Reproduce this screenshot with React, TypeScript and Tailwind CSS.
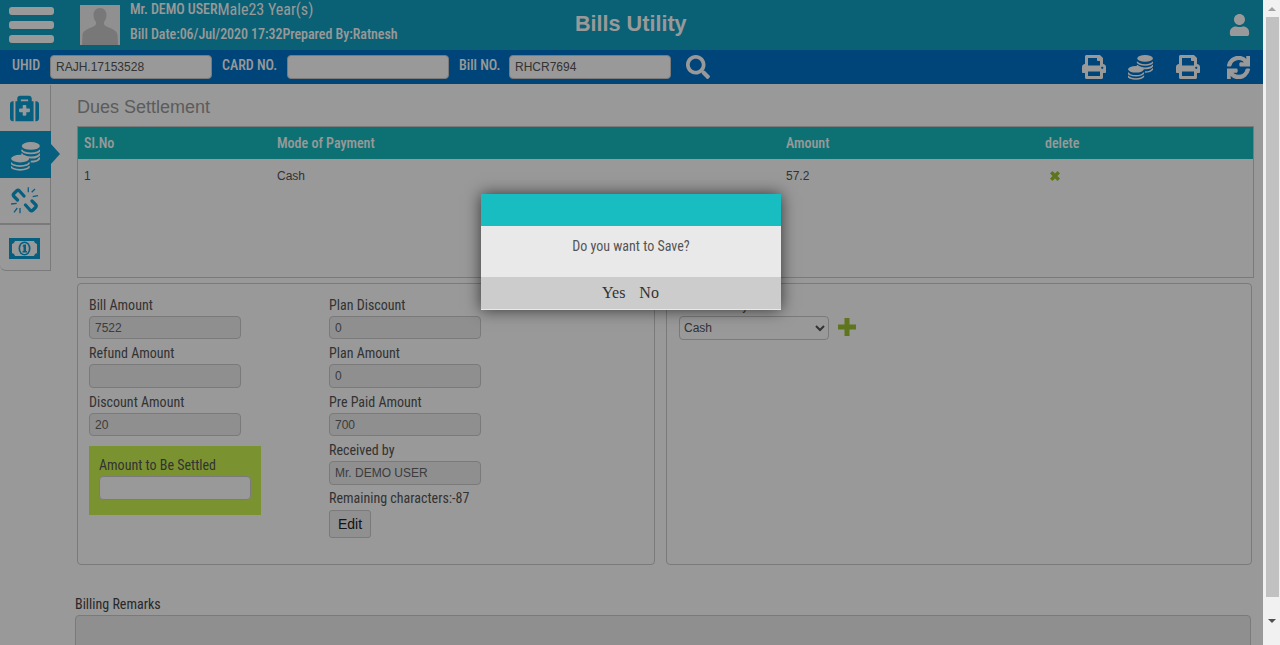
import { FaMedkit, FaPrint, FaSync, FaSearch, FaUser } from 'react-icons/fa';

// Bills Utility — dues settlement page behind a modal confirm dialog

const COND = "font-['Roboto_Condensed',Roboto,sans-serif] font-stretch-[75%]";
const ARIAL = "font-['Liberation_Sans',Arial,sans-serif]";

const Coins = ({ className }: { className?: string }) => (
    <svg viewBox="0 0 25 25" className={className} fill="none" stroke="currentColor" strokeWidth="1.5">
        <ellipse cx="17.100" cy="3.400" rx="7.800" ry="3.300" fill="currentColor" stroke="none" />
        <path d="M9.300 6.700a7.800 3.200 0 0 0 15.600 0M9.300 10a7.800 3.200 0 0 0 15.600 0M16 13.400c3.500.3 8-.5 8.900-3.400M17 17c3.500 0 7-1 7.900-3.600" />
        <ellipse cx="7.900" cy="14.300" rx="7.800" ry="3.300" fill="currentColor" stroke="none" />
        <path d="M.1 17.600a7.800 3.200 0 0 0 15.600 0M.1 20.800a7.800 3.200 0 0 0 15.600 0" />
    </svg>
);

const ChainBroken = ({ className }: { className?: string }) => (
    <svg viewBox="0 0 27 27" className={className} fill="none" stroke="currentColor">
        <path strokeWidth="3.200" strokeLinecap="round" strokeLinejoin="round" d="M6.500 13 3 9.500Q1.500 8 3 6.500L5.500 4Q7 2.500 8.500 4L13 9M14.500 18 19 23Q20.500 24.500 22 23L24.500 20.500Q26 19 24.500 17.500L21 14" />
        <path strokeWidth="1.300" d="M17.300.3v5M24 2l-3.300 3.300M27 8.700l-5.300 1M0 17l5.700-.7M3 25.300 6.300 21M9 21v5.300" />
    </svg>
);

const MoneyBill = ({ className }: { className?: string }) => (
    <svg viewBox="0 0 31 21" className={className}>
        <rect width="31" height="21" fill="currentColor" />
        <path fill="#fff" d="M6 3h19q.5 2.500 3 3v9q-2.500.5-3 3H6q-.5-2.500-3-3V6q2.500-.5 3-3z" />
        <ellipse cx="15.500" cy="10.500" rx="6" ry="7" fill="currentColor" />
        <ellipse cx="15.500" cy="10.500" rx="4.300" ry="5.500" fill="#fff" />
        <path fill="currentColor" d="M14.500 6.500H17v6.500h1v1.500h-4.500V13h1V8.800h-1z" />
    </svg>
);

const Cross = ({ className }: { className?: string }) => (
    <svg viewBox="0 0 10 10" className={className} fill="currentColor">
        <path d="M2.400 0 5 2.600 7.600 0 10 2.400 7.400 5 10 7.600 7.600 10 5 7.400 2.400 10 0 7.600 2.600 5 0 2.400z" />
    </svg>
);

const Plus = ({ className }: { className?: string }) => (
    <svg viewBox="0 0 18 18" className={className} fill="currentColor">
        <path d="M6.500 0h5v6.500H18v5h-6.500V18h-5v-6.500H0v-5h6.500z" />
    </svg>
);

const Field = ({ label, value, h = 'h-[23px]', gap = 'mb-[6px]' }: { label: string; value?: string; h?: string; gap?: string }) => (
    <div className={gap}>
        <div className={`${COND} text-[14px] leading-[17px] mb-[2px] text-[#555]`}>{label}</div>
        <div className={`${h} w-[152px] rounded-[4px] border border-[#ccc] bg-[#eee] px-[5px] flex items-center text-[12px] text-[#666] ${ARIAL}`}>{value}</div>
    </div>
);

const App = () => {
    return (
        <div className="relative flex h-[645px] w-[1280px] overflow-hidden bg-white">
            <div className="w-[1263px] shrink-0">
                {/* Top bar */}
                <header className="flex h-[50px] items-center bg-[#12a0c1] text-white">
                    <div className="ml-[9px] flex w-[45px] flex-col gap-[6px]">
                        <span className="h-[8px] rounded-[3px] bg-white" />
                        <span className="h-[8px] rounded-[3px] bg-white" />
                        <span className="h-[8px] rounded-[3px] bg-white" />
                    </div>
                    <div className="ml-[26px] h-[40px] w-[40px] bg-[#f0f0f0]">
                        <svg viewBox="0 0 40 40" className="h-full w-full text-[#c8c8c8]" fill="currentColor">
                            <path d="M20 3c-4 0-6.500 3-6.500 7 0 3 1 5 2.500 7 .5 2-.5 3.500-2.500 4.500C9 23.500 3 25 2.500 30L2 40h36l-.5-10c-.5-5-6.500-6.500-11-8.500-2-1-3-2.500-2.500-4.500 1.500-2 2.500-4 2.500-7 0-4-2.500-7-6.500-7z" />
                        </svg>
                    </div>
                    <div className={`ml-[10px] self-start ${COND}`}>
                        <div className="flex h-[19px] items-center whitespace-nowrap">
                            <span className="text-[14px] font-medium tracking-[-0.05px]">Mr. DEMO USER</span>
                            <span className="text-[16px]">Male23 Year(s)</span>
                        </div>
                        <div className="mt-[4px] flex h-[22px] items-center whitespace-nowrap text-[14px] font-medium tracking-[-0.05px]">Bill Date:06/Jul/2020 17:32Prepared By:Ratnesh</div>
                    </div>
                    <div className={`absolute left-[575px] top-[10px] text-[21.600px] font-bold leading-[28px] ${ARIAL}`}>Bills Utility</div>
                    <FaUser className="ml-auto mr-[13px] h-[22px] w-[21px]" />
                </header>

                {/* Search toolbar */}
                <div className="flex h-[34px] items-center bg-[#0073ca] text-white">
                    <span className={`ml-[12px] w-[38px] text-[14px] font-medium ${COND} -mt-[3px]`}>UHID</span>
                    <div className={`h-[24px] w-[162px] rounded-[4px] border border-[#ccc] bg-white px-[5px] text-[12px] leading-[22px] text-[#555] ${ARIAL}`}>RAJH.17153528</div>
                    <span className={`ml-[10px] w-[65px] text-[14px] font-medium ${COND} -mt-[3px]`}>CARD NO.</span>
                    <div className="h-[24px] w-[162px] rounded-[4px] border border-[#ccc] bg-white" />
                    <span className={`ml-[10px] w-[50px] text-[14px] font-medium ${COND} -mt-[3px]`}>Bill NO.</span>
                    <div className={`h-[24px] w-[162px] rounded-[4px] border border-[#ccc] bg-white px-[5px] text-[12px] leading-[22px] text-[#555] ${ARIAL}`}>RHCR7694</div>
                    <FaSearch className="ml-[15px] h-[24px] w-[24px]" />
                    <div className="ml-auto flex items-center">
                        <FaPrint className="h-[24px] w-[24px]" />
                        <Coins className="ml-[22px] h-[25px] w-[25px]" />
                        <FaPrint className="ml-[23px] h-[24px] w-[24px]" />
                        <FaSync className="ml-[27px] mr-[13px] h-[23px] w-[23px]" stroke="currentColor" strokeWidth={24} />
                    </div>
                </div>

                <div className="flex">
                    {/* Side nav */}
                    <nav className="w-[51px] shrink-0 pt-[1px] text-[#0d9fd6]">
                        <div className="flex h-[46px] items-center justify-center border-r border-[#ccc] pr-[1px]">
                            <FaMedkit className="h-[29px] w-[29px]" />
                        </div>
                        <div className="relative flex h-[47px] items-center justify-center bg-[#0a9fd4] pr-[1px] pt-[3px] text-white">
                            <Coins className="h-[29px] w-[29px]" />
                            <span className="absolute -right-[9px] top-[13px] h-0 w-0 border-y-[10px] border-l-[9px] border-y-transparent border-l-[#0a9fd4]" />
                        </div>
                        <div className="flex h-[46px] items-center justify-center border-b border-r border-[#ccc] pr-[1px]">
                            <ChainBroken className="h-[27px] w-[27px]" />
                        </div>
                        <div className="flex h-[47px] items-center justify-center rounded-bl-[6px] border-b border-r border-t border-[#ccc] pr-[1px] pt-[2px]">
                            <MoneyBill className="h-[21px] w-[31px]" />
                        </div>
                    </nav>

                    <main className="min-w-0 flex-1 pl-[26px] pr-[9px]">
                        <h1 className={`h-[42px] pt-[12px] text-[18px] leading-[22px] text-[#9a9a9a] ${ARIAL}`}>Dues Settlement</h1>

                        {/* Payments table */}
                        <div className="h-[152px] border border-[#ccc]">
                            <div className={`grid h-[32px] grid-cols-[199px_509px_259px_1fr] items-center bg-[#17bdc1] text-[14px] font-medium text-white ${COND}`}>
                                <span className="pl-[6px]">Sl.No</span>
                                <span>Mode of Payment</span>
                                <span>Amount</span>
                                <span>delete</span>
                            </div>
                            <div className={`grid h-[33px] grid-cols-[199px_509px_259px_1fr] items-center text-[12px] text-[#555] ${ARIAL}`}>
                                <span className="pl-[6px]">1</span>
                                <span>Cash</span>
                                <span>57.2</span>
                                <span className="pl-[5px]"><Cross className="h-[10px] w-[10px] text-[#9dc431]" /></span>
                            </div>
                        </div>

                        <div className="mt-[5px] flex gap-[11px]">
                            {/* Amounts */}
                            <section className="flex h-[282px] w-[578px] gap-[68px] rounded-[4px] border border-[#ccc] pl-[11px] pt-[13px]">
                                <div className="w-[172px]">
                                    <Field label="Bill Amount" value="7522" />
                                    <Field label="Refund Amount" h="h-[24px]" />
                                    <Field label="Discount Amount" value="20" gap="mb-[10px]" />
                                    <div className="h-[69px] bg-[#ccf650] px-[10px] pt-[11px]">
                                        <div className={`${COND} mb-[2px] text-[14px] leading-[17px] text-[#555]`}>Amount to Be Settled</div>
                                        <div className="h-[24px] w-[152px] rounded-[4px] border border-[#ccc] bg-white" />
                                    </div>
                                </div>
                                <div>
                                    <Field label="Plan Discount" value="0" />
                                    <Field label="Plan Amount" value="0" h="h-[24px]" />
                                    <Field label="Pre Paid Amount" value="700" />
                                    <Field label="Received by" value="Mr. DEMO USER" h="h-[24px]" gap="mb-[5px]" />
                                    <div className={`${COND} text-[14px] leading-[17px] text-[#555]`}>Remaining characters:-87</div>
                                    <button className={`mt-[3px] h-[28px] w-[42px] rounded-[3px] border border-[#ccc] bg-[#f0f0f0] text-[14px] text-[#222] ${ARIAL}`}>Edit</button>
                                </div>
                            </section>

                            {/* Mode of payment */}
                            <section className="h-[282px] w-[586px] rounded-[4px] border border-[#ccc] pl-[12px] pt-[13px]">
                                <div className={`${COND} mb-[2px] text-[14px] leading-[17px] text-[#555]`}>Mode of Payment</div>
                                <div className="flex items-center">
                                    <select defaultValue="Cash" className={`h-[24px] w-[150px] rounded-[4px] border border-[#ccc] bg-white text-[12px] text-[#555] ${ARIAL}`}>
                                        <option>Cash</option>
                                    </select>
                                    <Plus className="ml-[9px] h-[18px] w-[18px] -mt-[2px] text-[#9dc431]" />
                                </div>
                            </section>
                        </div>

                        <div className="-ml-[2px] mt-[31px] w-[1176px]">
                            <div className={`${COND} mb-[2px] text-[14px] leading-[17px] text-[#444]`}>Billing Remarks</div>
                            <div className="h-[60px] rounded-[4px] border border-[#ccc] bg-[#eee]" />
                        </div>
                    </main>
                </div>
            </div>

            {/* Browser scrollbar */}
            <div className="flex w-[17px] shrink-0 flex-col items-center bg-[#f1f1f1] pl-[1px]">
                <div className="flex h-[17px] items-center justify-center">
                    <span className="h-0 w-0 border-x-[4px] border-b-[4px] border-x-transparent border-b-[#a3a3a3]" />
                </div>
                <div className="h-[580px] w-[13px] bg-[#c1c1c1]" />
                <div className="flex flex-1 items-center justify-center">
                    <span className="h-0 w-0 border-x-[4px] border-t-[4px] border-x-transparent border-t-[#505050]" />
                </div>
            </div>

            {/* Modal backdrop */}
            <div className="absolute left-0 top-0 h-[645px] w-[1263px] bg-black/40" />

            {/* Confirm dialog */}
            <div className="absolute left-[481px] top-[194px] w-[300px] shadow-[0_0_15px_rgba(0,0,0,0.65)]">
                <div className="h-[32px] bg-[#17bdc1]" />
                <div className={`flex h-[51px] items-center justify-center bg-[#e9e9e9] pb-[11px] text-[14px] text-[#555] ${COND}`}>Do you want to Save?</div>
                <div className="flex h-[33px] items-center justify-center gap-[14px] border-b border-[#e9e9e9] bg-[#cccccc] pr-[1px] text-[16px] text-[#333] font-['Liberation_Serif',serif]">
                    <span>Yes</span>
                    <span>No</span>
                </div>
            </div>
        </div>
    );
};

export default App;
